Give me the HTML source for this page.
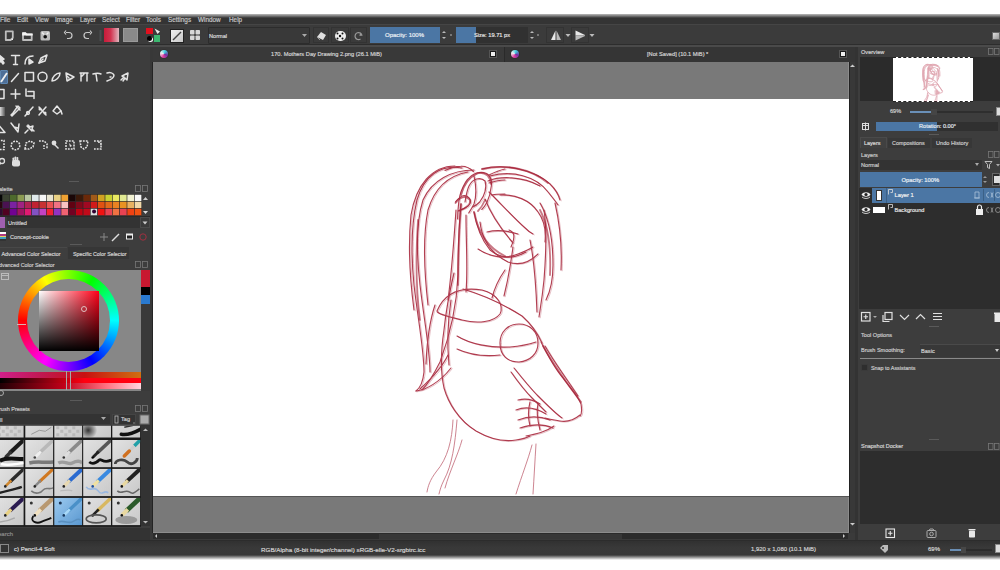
<!DOCTYPE html>
<html><head><meta charset="utf-8">
<style>
*{margin:0;padding:0;box-sizing:border-box}
html,body{width:1000px;height:570px;overflow:hidden;background:#fff}
body{position:relative;font-family:"Liberation Sans",sans-serif;color:#c8c8c8;font-size:7px}
.a{position:absolute}
#app{left:0;top:14px;width:1000px;height:546px;background:#3a3a3a;overflow:hidden}
#menubar{left:0;top:0;width:1000px;height:10px;background:#343434}
#menubar span{position:absolute;top:2px;font-size:6.4px;color:#c4c4c4;white-space:nowrap;-webkit-text-stroke:0.2px currentColor}
#toolbar{left:0;top:10px;width:1000px;height:21px;background:#3b3b3b;border-top:1px solid #454545;border-bottom:1px solid #2d2d2d}
#strip{left:0;top:31px;width:1000px;height:1.5px;background:#4a4a4a}
#leftdock{left:0;top:33px;width:151px;height:493px;background:#3d3d3d}
#tabbar{left:151px;top:33px;width:706px;height:15px;background:#363636}
#canvasarea{left:153px;top:48px;width:696px;height:471px;background:#797979;box-shadow:inset -1px -1px 0 #8c8c8c}
#paper{left:0;top:36.5px;width:696px;height:397.5px;background:#fff;box-shadow:0 1px 0 #555}
#vscroll{left:849px;top:48px;width:7px;height:471px;background:#383838;border-left:1px solid #222}
#hscroll{left:153px;top:519px;width:695px;height:6px;background:#2b2b2b}
#rightdock{left:857px;top:33px;width:143px;height:493px;background:#3d3d3d}
#statusbar{left:0;top:526px;width:1000px;height:20px;background:linear-gradient(180deg,#303030,#393939 40%,#373737)}
.t{position:absolute;white-space:nowrap;-webkit-text-stroke:0.2px currentColor}
</style></head>
<body>
<div id="app" class="a">
  <div id="menubar" class="a">
    <span style="left:0">File</span><span style="left:17px">Edit</span><span style="left:35px">View</span><span style="left:55px">Image</span><span style="left:80px">Layer</span><span style="left:102px">Select</span><span style="left:126px">Filter</span><span style="left:146px">Tools</span><span style="left:168px">Settings</span><span style="left:198px">Window</span><span style="left:229px">Help</span>
  </div>
  <div id="toolbar" class="a">
    <svg class="a" style="left:0;top:0" width="1000" height="21" viewBox="0 0 1000 21">
      <g fill="none" stroke="#bdbdbd" stroke-width="1.8" stroke-linejoin="round">
        <path d="M5.8 6.3h7v6.5l-2.2 2.2h-4.8z"/>
        <path d="M23 8.5h2.5l1 1h5.2v5.5h-8.7z"/>
      </g>
      <path d="M11 15l2-2v2z" fill="#eee"/>
      <path d="M22.2 7.3h3.5l1.2 1.2h5.8v2h-10.5z" fill="#f4f4f4"/>
      <rect x="40.5" y="6" width="9.5" height="9.5" rx="1.5" fill="#bbb"/>
      <circle cx="45.2" cy="11.8" r="1.8" fill="#111"/>
      <path d="M42 7.5l2 2M48.5 7.5l-2 2" stroke="#f0f0f0" stroke-width="1.3"/>
      <g fill="none" stroke="#c8c8c8" stroke-width="1.2">
        <path d="M66 7.5h3a3 3 0 0 1 0 6h-2"/><path d="M66 5.5l-1.5 2l1.5 2"/>
        <path d="M90 7.5h-3a3 3 0 0 0 0 6h2"/><path d="M90 5.5l1.5 2l-1.5 2"/>
      </g>
      <rect x="99.5" y="5" width="2" height="11" fill="#4a4e50"/>
    </svg>
    <div class="a" style="left:104px;top:3px;width:15px;height:14px;background:linear-gradient(90deg,#c81c3a 0%,#d23450 45%,#e0b8c0 100%)"></div>
    <div class="a" style="left:123px;top:3px;width:15px;height:14px;background:#8a8a8a;border:1px solid #9a9a9a"></div>
    <div class="a" style="left:146px;top:3px;width:7px;height:6px;background:#e0101e"></div>
    <div class="a" style="left:154px;top:10px;width:6px;height:7px;background:#3cb870"></div>
    <div class="a" style="left:147px;top:11px;width:5px;height:5px;background:#000;border-radius:50%;box-shadow:1px 1px 0 #fff"></div>
    <svg class="a" style="left:154px;top:3px" width="7" height="7"><path d="M0.5 0.5L6 3.5L3.5 6z" fill="#e8e8e8"/></svg>
    <div class="a" style="left:170px;top:4px;width:14px;height:14px;background:linear-gradient(135deg,#f0f0f0,#c8c8c8);border:1px solid #222"></div>
    <svg class="a" style="left:170px;top:4px" width="14" height="14"><path d="M3 11L11 3" stroke="#444" stroke-width="1.5"/></svg>
    <svg class="a" style="left:190px;top:5px" width="11" height="11"><g fill="#d8d8d8"><rect x="0" y="0" width="4.5" height="4.5" rx="0.8"/><rect x="5.5" y="0" width="4.5" height="4.5" rx="0.8"/><rect x="0" y="5.5" width="4.5" height="4.5" rx="0.8"/><rect x="5.5" y="5.5" width="4.5" height="4.5" rx="0.8"/></g></svg>
    <div class="a" style="left:207.5px;top:1.5px;width:102px;height:17px;background:#393939;border:1px solid #2c2c2c;border-radius:1px"></div><div class="a" style="left:313px;top:2px;width:16px;height:16px;border:1px solid #333"></div><div class="a" style="left:331px;top:2px;width:18px;height:16px;border:1px solid #333"></div><div class="a" style="left:350px;top:2px;width:17px;height:16px;border:1px solid #333"></div><div class="a" style="left:546px;top:2px;width:18px;height:16px;border:1px solid #333"></div><div class="a" style="left:571px;top:2px;width:18px;height:16px;border:1px solid #333"></div>
    <span class="t" style="left:209px;top:8px;font-size:5.6px;color:#d8d8d8">Normal</span>
    <svg class="a" style="left:302px;top:9px" width="6" height="4"><path d="M0 0h5l-2.5 3z" fill="#aaa"/></svg>
    <svg class="a" style="left:315px;top:5px" width="12" height="11"><path d="M2 7l4-5l5 3l-3 5z" fill="#e0e0e0"/><path d="M2 7l3 3" stroke="#999"/></svg>
    <div class="a" style="left:335px;top:5.5px;width:10.5px;height:10.5px;background:#eee;border-radius:50%"></div>
    <svg class="a" style="left:335px;top:6px" width="10" height="10"><g fill="#111"><circle cx="5" cy="5" r="1.2"/><circle cx="2.5" cy="2.5" r="1"/><circle cx="7.5" cy="2.5" r="1"/><circle cx="2.5" cy="7.5" r="1"/><circle cx="7.5" cy="7.5" r="1"/></g></svg>
    <svg class="a" style="left:354px;top:6px" width="10" height="10"><path d="M8 4.5A3.5 3.5 0 1 0 6.5 8" fill="none" stroke="#999" stroke-width="1.2"/><path d="M6 1.5l2.5 3l-3 0.5z" fill="#999"/></svg>
    <div class="a" style="left:370px;top:2px;width:70px;height:16px;background:#4b76a4"></div>
    <span class="t" style="left:385px;top:7px;font-size:6px;color:#e8eef4">Opacity: 100%</span>
    <svg class="a" style="left:441px;top:3px" width="6" height="14"><path d="M1 5l2-2l2 2zM1 9l2 2l2-2z" fill="#bbb"/></svg>
    <div class="a" style="left:450px;top:9px;width:2px;height:2px;background:#777"></div>
    <div class="a" style="left:456px;top:2px;width:20px;height:16px;background:#4b76a4"></div>
    <div class="a" style="left:476px;top:2px;width:52px;height:16px;background:#313131"></div>
    <span class="t" style="left:474px;top:7px;font-size:5.7px;color:#e0e0e0">Size: 19.71 px</span>
    <svg class="a" style="left:529px;top:3px" width="6" height="14"><path d="M1 5l2-2l2 2zM1 9l2 2l2-2z" fill="#bbb"/></svg>
    <div class="a" style="left:537px;top:9px;width:2px;height:2px;background:#777"></div>
    <svg class="a" style="left:550px;top:5px" width="12" height="11"><path d="M5.5 0.5L1 10h4.5z" fill="#e8e8e8"/><path d="M6.5 0.5L11 10H6.5z" fill="#bbb"/></svg>
    <svg class="a" style="left:565px;top:8px" width="6" height="5"><path d="M0.5 1h5l-2.5 3z" fill="#bbb"/></svg>
    <svg class="a" style="left:575px;top:5px" width="11" height="11"><path d="M0.5 0.5L10 5v0.5H0.5z" fill="#e8e8e8"/><path d="M0.5 10.5L10 6v-0.5H0.5z" fill="#bbb"/></svg>
    <svg class="a" style="left:589px;top:8px" width="6" height="5"><path d="M0.5 1h5l-2.5 3z" fill="#bbb"/></svg>
    <div class="a" style="left:992px;top:7px;width:8px;height:8px;background:linear-gradient(135deg,#ddd,#999);border:1px solid #666"></div>
  </div>
  <div id="strip" class="a"></div>
  <div id="leftdock" class="a"></div>
  <div id="tabbar" class="a"></div>
  <div id="canvasarea" class="a"><div id="paper" class="a"></div></div>
  <div id="vscroll" class="a"></div>
  <div id="hscroll" class="a"></div>
  <div id="rightdock" class="a"></div>
  <div id="statusbar" class="a"></div>
</div>

<!-- palette header -->
<div class="a" style="left:69px;top:181px;width:10px;height:1px;background:#5a5a5a"></div>
<span class="t" style="left:-1px;top:186px;font-size:5.6px;color:#c8c8c8">alette</span>
<svg class="a" style="left:135px;top:185px" width="14" height="8"><g fill="none" stroke="#777" stroke-width="0.8"><rect x="0.5" y="0.5" width="5" height="6"/><rect x="7.5" y="0.5" width="5" height="6"/></g></svg>
<svg class="a" style="left:0;top:0" width="151" height="230"><rect x="-4.90" y="194.5" width="7.38" height="7.05" fill="#050505" stroke="#2a2a2a" stroke-width="0.5"/><rect x="2.43" y="194.5" width="7.38" height="7.05" fill="#3b4232" stroke="#2a2a2a" stroke-width="0.5"/><rect x="9.76" y="194.5" width="7.38" height="7.05" fill="#4e6a2c" stroke="#2a2a2a" stroke-width="0.5"/><rect x="17.09" y="194.5" width="7.38" height="7.05" fill="#8b9b52" stroke="#2a2a2a" stroke-width="0.5"/><rect x="24.42" y="194.5" width="7.38" height="7.05" fill="#b9c8a2" stroke="#2a2a2a" stroke-width="0.5"/><rect x="31.75" y="194.5" width="7.38" height="7.05" fill="#dfe9ea" stroke="#2a2a2a" stroke-width="0.5"/><rect x="39.08" y="194.5" width="7.38" height="7.05" fill="#f6f6f6" stroke="#2a2a2a" stroke-width="0.5"/><rect x="46.41" y="194.5" width="7.38" height="7.05" fill="#e9e5d2" stroke="#2a2a2a" stroke-width="0.5"/><rect x="53.74" y="194.5" width="7.38" height="7.05" fill="#e9d184" stroke="#2a2a2a" stroke-width="0.5"/><rect x="61.07" y="194.5" width="7.38" height="7.05" fill="#f0a232" stroke="#2a2a2a" stroke-width="0.5"/><rect x="68.40" y="194.5" width="7.38" height="7.05" fill="#1a0707" stroke="#2a2a2a" stroke-width="0.5"/><rect x="75.73" y="194.5" width="7.38" height="7.05" fill="#3b1909" stroke="#2a2a2a" stroke-width="0.5"/><rect x="83.06" y="194.5" width="7.38" height="7.05" fill="#6b2909" stroke="#2a2a2a" stroke-width="0.5"/><rect x="90.39" y="194.5" width="7.38" height="7.05" fill="#a15a19" stroke="#2a2a2a" stroke-width="0.5"/><rect x="97.72" y="194.5" width="7.38" height="7.05" fill="#d1a221" stroke="#2a2a2a" stroke-width="0.5"/><rect x="105.05" y="194.5" width="7.38" height="7.05" fill="#c9d132" stroke="#2a2a2a" stroke-width="0.5"/><rect x="112.38" y="194.5" width="7.38" height="7.05" fill="#e9e962" stroke="#2a2a2a" stroke-width="0.5"/><rect x="119.71" y="194.5" width="7.38" height="7.05" fill="#e1e992" stroke="#2a2a2a" stroke-width="0.5"/><rect x="127.04" y="194.5" width="7.38" height="7.05" fill="#f1f1d2" stroke="#2a2a2a" stroke-width="0.5"/><rect x="134.37" y="194.5" width="7.38" height="7.05" fill="#f9f9f9" stroke="#2a2a2a" stroke-width="0.5"/><rect x="-4.90" y="201.5" width="7.38" height="7.05" fill="#2a0510" stroke="#2a2a2a" stroke-width="0.5"/><rect x="2.43" y="201.5" width="7.38" height="7.05" fill="#4a1252" stroke="#2a2a2a" stroke-width="0.5"/><rect x="9.76" y="201.5" width="7.38" height="7.05" fill="#7b22a2" stroke="#2a2a2a" stroke-width="0.5"/><rect x="17.09" y="201.5" width="7.38" height="7.05" fill="#a12282" stroke="#2a2a2a" stroke-width="0.5"/><rect x="24.42" y="201.5" width="7.38" height="7.05" fill="#b12252" stroke="#2a2a2a" stroke-width="0.5"/><rect x="31.75" y="201.5" width="7.38" height="7.05" fill="#c12232" stroke="#2a2a2a" stroke-width="0.5"/><rect x="39.08" y="201.5" width="7.38" height="7.05" fill="#c93232" stroke="#2a2a2a" stroke-width="0.5"/><rect x="46.41" y="201.5" width="7.38" height="7.05" fill="#e95252" stroke="#2a2a2a" stroke-width="0.5"/><rect x="53.74" y="201.5" width="7.38" height="7.05" fill="#f17282" stroke="#2a2a2a" stroke-width="0.5"/><rect x="61.07" y="201.5" width="7.38" height="7.05" fill="#f9c2c2" stroke="#2a2a2a" stroke-width="0.5"/><rect x="68.40" y="201.5" width="7.38" height="7.05" fill="#610212" stroke="#2a2a2a" stroke-width="0.5"/><rect x="75.73" y="201.5" width="7.38" height="7.05" fill="#81091a" stroke="#2a2a2a" stroke-width="0.5"/><rect x="83.06" y="201.5" width="7.38" height="7.05" fill="#a10922" stroke="#2a2a2a" stroke-width="0.5"/><rect x="90.39" y="201.5" width="7.38" height="7.05" fill="#d11a1a" stroke="#2a2a2a" stroke-width="0.5"/><rect x="97.72" y="201.5" width="7.38" height="7.05" fill="#e15212" stroke="#2a2a2a" stroke-width="0.5"/><rect x="105.05" y="201.5" width="7.38" height="7.05" fill="#e16a1a" stroke="#2a2a2a" stroke-width="0.5"/><rect x="112.38" y="201.5" width="7.38" height="7.05" fill="#e98222" stroke="#2a2a2a" stroke-width="0.5"/><rect x="119.71" y="201.5" width="7.38" height="7.05" fill="#e99222" stroke="#2a2a2a" stroke-width="0.5"/><rect x="127.04" y="201.5" width="7.38" height="7.05" fill="#e9b262" stroke="#2a2a2a" stroke-width="0.5"/><rect x="134.37" y="201.5" width="7.38" height="7.05" fill="#f1d9aa" stroke="#2a2a2a" stroke-width="0.5"/><rect x="-4.90" y="208.5" width="7.38" height="7.05" fill="#300a32" stroke="#2a2a2a" stroke-width="0.5"/><rect x="2.43" y="208.5" width="7.38" height="7.05" fill="#510222" stroke="#2a2a2a" stroke-width="0.5"/><rect x="9.76" y="208.5" width="7.38" height="7.05" fill="#710292" stroke="#2a2a2a" stroke-width="0.5"/><rect x="17.09" y="208.5" width="7.38" height="7.05" fill="#a11262" stroke="#2a2a2a" stroke-width="0.5"/><rect x="24.42" y="208.5" width="7.38" height="7.05" fill="#e11a72" stroke="#2a2a2a" stroke-width="0.5"/><rect x="31.75" y="208.5" width="7.38" height="7.05" fill="#8252c2" stroke="#2a2a2a" stroke-width="0.5"/><rect x="39.08" y="208.5" width="7.38" height="7.05" fill="#c242c2" stroke="#2a2a2a" stroke-width="0.5"/><rect x="46.41" y="208.5" width="7.38" height="7.05" fill="#f12232" stroke="#2a2a2a" stroke-width="0.5"/><rect x="53.74" y="208.5" width="7.38" height="7.05" fill="#9232c2" stroke="#2a2a2a" stroke-width="0.5"/><rect x="61.07" y="208.5" width="7.38" height="7.05" fill="#f16272" stroke="#2a2a2a" stroke-width="0.5"/><rect x="68.40" y="208.5" width="7.38" height="7.05" fill="#710222" stroke="#2a2a2a" stroke-width="0.5"/><rect x="75.73" y="208.5" width="7.38" height="7.05" fill="#c10212" stroke="#2a2a2a" stroke-width="0.5"/><rect x="83.06" y="208.5" width="7.38" height="7.05" fill="#c10a1a" stroke="#2a2a2a" stroke-width="0.5"/><rect x="90.39" y="208.5" width="7.38" height="7.05" fill="#ddd" stroke="#2a2a2a" stroke-width="0.5"/><rect x="97.72" y="208.5" width="7.38" height="7.05" fill="#f11212" stroke="#2a2a2a" stroke-width="0.5"/><rect x="105.05" y="208.5" width="7.38" height="7.05" fill="#e94252" stroke="#2a2a2a" stroke-width="0.5"/><rect x="112.38" y="208.5" width="7.38" height="7.05" fill="#f17242" stroke="#2a2a2a" stroke-width="0.5"/><rect x="119.71" y="208.5" width="7.38" height="7.05" fill="#e94252" stroke="#2a2a2a" stroke-width="0.5"/><rect x="127.04" y="208.5" width="7.38" height="7.05" fill="#f14212" stroke="#2a2a2a" stroke-width="0.5"/><rect x="134.37" y="208.5" width="7.38" height="7.05" fill="#f15212" stroke="#2a2a2a" stroke-width="0.5"/><circle cx="94.06" cy="211.5" r="2" fill="#300030"/></svg>
<svg class="a" style="left:141px;top:194px" width="9" height="22"><path d="M2 6l2.5-3l2.5 3z" fill="#ccc"/><path d="M2 17l2.5 3l2.5-3z" fill="#ddd"/></svg>
<div class="a" style="left:0;top:216px;width:151px;height:1px;background:#2a2a2a"></div>
<div class="a" style="left:0;top:217px;width:5px;height:11px;background:#a060b0"></div>
<div class="a" style="left:7px;top:217px;width:133px;height:11px;background:#333"></div>
<span class="t" style="left:8px;top:219.5px;font-size:5.6px;color:#d0d0d0">Untitled</span>
<svg class="a" style="left:140px;top:217px" width="10" height="11"><rect x="0.5" y="0.5" width="9" height="10" fill="#3a3a3a" stroke="#4a4a4a"/><path d="M2.5 4.5h5l-2.5 3z" fill="#ccc"/></svg>
<div class="a" style="left:0;top:232px;width:6px;height:9px;background:linear-gradient(180deg,#fff 0,#fff 20%,#b03a80 20%,#b03a80 40%,#e8d060 40%,#e8d060 60%,#40a0c0 60%,#40a0c0 80%,#333 80%)"></div>
<span class="t" style="left:10px;top:233.5px;font-size:5.6px;color:#d0d0d0">Concept-cookie</span>
<svg class="a" style="left:98px;top:230px" width="52" height="14">
 <g fill="none" stroke="#888" stroke-width="1"><path d="M6 3v8M2 7h8"/></g>
 <g fill="none" stroke="#ddd" stroke-width="1.4"><path d="M14 11l7-7"/></g>
 <rect x="28" y="3.5" width="7" height="6" fill="#eee"/><rect x="29" y="5.5" width="5" height="3" fill="#222"/>
 <circle cx="45" cy="7" r="3.2" fill="none" stroke="#a03040" stroke-width="1"/>
</svg>
<div class="a" style="left:70px;top:244px;width:12px;height:1px;background:#5a5a5a"></div>
<!-- color selector tabs -->
<div class="a" style="left:0;top:247px;width:67px;height:12px;background:#3e3e3e;border-top:1px solid #484848"></div>
<div class="a" style="left:68px;top:247px;width:61px;height:12px;background:#363636"></div>
<span class="t" style="left:1.5px;top:250.5px;font-size:5.35px;color:#d0d0d0">Advanced Color Selector</span>
<span class="t" style="left:73px;top:250.5px;font-size:5.3px;color:#d0d0d0">Specific Color Selector</span>
<span class="t" style="left:-1px;top:262px;font-size:5.35px;color:#c8c8c8">dvanced Color Selector</span>
<svg class="a" style="left:135px;top:261px" width="14" height="8"><g fill="none" stroke="#777" stroke-width="0.8"><rect x="0.5" y="0.5" width="5" height="6"/><rect x="7.5" y="0.5" width="5" height="6"/></g></svg>
<!-- color selector -->
<div class="a" style="left:0;top:270px;width:141px;height:121px;background:#878787"></div>
<div class="a" style="left:18px;top:270px;width:101px;height:101px;border-radius:50%;background:conic-gradient(from 270deg,#ff0000,#ffff00,#00ff00,#00ffff,#0000ff,#ff00ff,#ff0000)"></div>
<div class="a" style="left:27px;top:279px;width:83px;height:83px;border-radius:50%;background:#878787"></div>
<div class="a" style="left:39px;top:291px;width:60px;height:60px;background:linear-gradient(180deg,rgba(0,0,0,0),#000),linear-gradient(90deg,#fff,#ff0018)"></div>
<div class="a" style="left:81px;top:306px;width:6px;height:6px;border-radius:50%;border:1px solid #e0c0c0"></div>
<div class="a" style="left:17px;top:324px;width:9px;height:1px;background:#e0b0b0"></div>
<svg class="a" style="left:1px;top:272px" width="9" height="9"><rect x="0.5" y="1.5" width="7" height="6" fill="none" stroke="#bbb"/><path d="M0.5 3.5h7" stroke="#bbb"/></svg>
<div class="a" style="left:0;top:372px;width:141px;height:5.5px;background:linear-gradient(90deg,#d0208a,#c01850 30%,#c81010 60%,#d07010)"></div>
<div class="a" style="left:0;top:377.5px;width:141px;height:5.5px;background:linear-gradient(90deg,#000,#800010 30%,#ff0010 60%,#ff0010)"></div>
<div class="a" style="left:0;top:383px;width:141px;height:6px;background:linear-gradient(90deg,#200005,#c00018 45%,#ff7080 75%,#ffd8e0)"></div>
<div class="a" style="left:65.5px;top:371px;width:1px;height:19px;background:#a8a8a8"></div>
<div class="a" style="left:69.5px;top:371px;width:1px;height:19px;background:#a8a8a8"></div>
<div class="a" style="left:141px;top:270px;width:9px;height:17px;background:#c81830"></div>
<div class="a" style="left:141px;top:287px;width:9px;height:8px;background:#000"></div>
<div class="a" style="left:141px;top:295px;width:9px;height:9px;background:#2a7ad0"></div>
<div class="a" style="left:141px;top:304px;width:9px;height:87px;background:#3a3a3a"></div>
<svg class="a" style="left:0;top:390px" width="6" height="8"><circle cx="1" cy="3" r="2.5" fill="none" stroke="#aaa"/></svg>
<div class="a" style="left:70px;top:400px;width:12px;height:1px;background:#5a5a5a"></div>
<!-- brush presets -->
<span class="t" style="left:-1px;top:405.5px;font-size:5.5px;color:#c8c8c8">rush Presets</span>
<svg class="a" style="left:135px;top:405px" width="14" height="8"><g fill="none" stroke="#777" stroke-width="0.8"><rect x="0.5" y="0.5" width="5" height="6"/><rect x="7.5" y="0.5" width="5" height="6"/></g></svg>
<div class="a" style="left:0;top:414px;width:110px;height:10px;background:#333"></div>
<span class="t" style="left:0px;top:416.5px;font-size:5.6px;color:#c8c8c8">ll</span>
<svg class="a" style="left:101px;top:417px" width="6" height="4"><path d="M0 0h5l-2.5 3z" fill="#aaa"/></svg>
<div class="a" style="left:112px;top:414px;width:24px;height:11px;background:#333;border:1px solid #444"></div><svg class="a" style="left:112px;top:414px" width="38" height="11"><rect x="3" y="2" width="3" height="7" fill="none" stroke="#bbb" stroke-width="0.8"/><path d="M21 9h2" stroke="#888"/><rect x="28" y="1" width="9" height="9" fill="#aaa" stroke="#666"/></svg><span class="t" style="left:121px;top:416px;font-size:5.6px;color:#ccc">Tag</span>
<svg class="a" style="left:0;top:0" width="151" height="540"><defs><clipPath id="bc"><rect x="0" y="425.8" width="141" height="101"/></clipPath><linearGradient id="tg" x1="0" y1="0" x2="1" y2="1"><stop offset="0" stop-color="#e2e2e2"/><stop offset="1" stop-color="#c8c8c8"/></linearGradient><linearGradient id="tb" x1="0" y1="0" x2="1" y2="1"><stop offset="0" stop-color="#9ccaf0"/><stop offset="1" stop-color="#5a98d0"/></linearGradient><radialGradient id="blob"><stop offset="0" stop-color="#333"/><stop offset="1" stop-color="#333" stop-opacity="0"/></radialGradient><clipPath id="t00"><rect x="-4.2" y="410.3" width="27.8" height="27.2"/></clipPath><clipPath id="t01"><rect x="25.3" y="410.3" width="27.8" height="27.2"/></clipPath><clipPath id="t02"><rect x="54.3" y="410.3" width="27.8" height="27.2"/></clipPath><clipPath id="t03"><rect x="83.2" y="410.3" width="27.8" height="27.2"/></clipPath><clipPath id="t04"><rect x="112.3" y="410.3" width="27.8" height="27.2"/></clipPath><clipPath id="t10"><rect x="-4.2" y="440" width="27.8" height="27.2"/></clipPath><clipPath id="t11"><rect x="25.3" y="440" width="27.8" height="27.2"/></clipPath><clipPath id="t12"><rect x="54.3" y="440" width="27.8" height="27.2"/></clipPath><clipPath id="t13"><rect x="83.2" y="440" width="27.8" height="27.2"/></clipPath><clipPath id="t14"><rect x="112.3" y="440" width="27.8" height="27.2"/></clipPath><clipPath id="t20"><rect x="-4.2" y="468.9" width="27.8" height="27.2"/></clipPath><clipPath id="t21"><rect x="25.3" y="468.9" width="27.8" height="27.2"/></clipPath><clipPath id="t22"><rect x="54.3" y="468.9" width="27.8" height="27.2"/></clipPath><clipPath id="t23"><rect x="83.2" y="468.9" width="27.8" height="27.2"/></clipPath><clipPath id="t24"><rect x="112.3" y="468.9" width="27.8" height="27.2"/></clipPath><clipPath id="t30"><rect x="-4.2" y="497.9" width="27.8" height="27.2"/></clipPath><clipPath id="t31"><rect x="25.3" y="497.9" width="27.8" height="27.2"/></clipPath><clipPath id="t32"><rect x="54.3" y="497.9" width="27.8" height="27.2"/></clipPath><clipPath id="t33"><rect x="83.2" y="497.9" width="27.8" height="27.2"/></clipPath><clipPath id="t34"><rect x="112.3" y="497.9" width="27.8" height="27.2"/></clipPath></defs><g clip-path="url(#bc)"><rect x="0" y="400" width="141" height="130" fill="#1a1a1a"/><rect x="-4.2" y="410.3" width="27.8" height="27.2" fill="url(#tg)"/><g clip-path="url(#t00)"><rect x="-2.2" y="426.3" width="3" height="3" fill="#aaa" opacity="0.6"/><rect x="-2.2" y="433.3" width="3" height="3" fill="#aaa" opacity="0.6"/><rect x="1.7999999999999998" y="429.8" width="3" height="3" fill="#aaa" opacity="0.6"/><rect x="5.8" y="426.3" width="3" height="3" fill="#aaa" opacity="0.6"/><rect x="5.8" y="433.3" width="3" height="3" fill="#aaa" opacity="0.6"/><rect x="9.8" y="429.8" width="3" height="3" fill="#aaa" opacity="0.6"/><rect x="13.8" y="426.3" width="3" height="3" fill="#aaa" opacity="0.6"/><rect x="13.8" y="433.3" width="3" height="3" fill="#aaa" opacity="0.6"/><rect x="17.8" y="429.8" width="3" height="3" fill="#aaa" opacity="0.6"/></g><rect x="25.3" y="410.3" width="27.8" height="27.2" fill="url(#tg)"/><g clip-path="url(#t01)"><path d="M31.3 434.3l8-4l6 1l6-4" stroke="#999" stroke-width="1" fill="none"/></g><rect x="54.3" y="410.3" width="27.8" height="27.2" fill="url(#tg)"/><g clip-path="url(#t02)"><rect x="56.3" y="426.3" width="3" height="3" fill="#aaa" opacity="0.6"/><rect x="56.3" y="433.3" width="3" height="3" fill="#aaa" opacity="0.6"/><rect x="60.3" y="429.8" width="3" height="3" fill="#aaa" opacity="0.6"/><rect x="64.3" y="426.3" width="3" height="3" fill="#aaa" opacity="0.6"/><rect x="64.3" y="433.3" width="3" height="3" fill="#aaa" opacity="0.6"/><rect x="68.3" y="429.8" width="3" height="3" fill="#aaa" opacity="0.6"/><rect x="72.3" y="426.3" width="3" height="3" fill="#aaa" opacity="0.6"/><rect x="72.3" y="433.3" width="3" height="3" fill="#aaa" opacity="0.6"/><rect x="76.3" y="429.8" width="3" height="3" fill="#aaa" opacity="0.6"/></g><rect x="83.2" y="410.3" width="27.8" height="27.2" fill="url(#tg)"/><g clip-path="url(#t03)"><ellipse cx="88.2" cy="430.3" rx="9" ry="9" fill="url(#blob)"/></g><rect x="112.3" y="410.3" width="27.8" height="27.2" fill="url(#tg)"/><g clip-path="url(#t04)"><path d="M121.3 434.3c6 1 12-1 19-5" stroke="#111" stroke-width="3.5" fill="none" stroke-linecap="round"/><path d="M124.3 427.3c5-1 10-2 16-4" stroke="#333" stroke-width="1.5" fill="none"/></g><rect x="-4.2" y="440" width="27.8" height="27.2" fill="url(#tg)"/><g clip-path="url(#t10)"><path d="M24.8 439 L9.8 453" stroke="#1a1a1a" stroke-width="4.2" stroke-linecap="butt"/><path d="M11.3 451.5 L5.8 457" stroke="#333" stroke-width="3.4000000000000004"/><circle cx="5.3" cy="457.5" r="1.3" fill="#111"/><path d="M-0.20000000000000018 461c6-4 12-2 24-2" stroke="#111" stroke-width="4" fill="none"/><path d="M0.7999999999999998 464c8 2 14 0 23-1" stroke="#fff" stroke-width="2.5" fill="none"/></g><rect x="25.3" y="440" width="27.8" height="27.2" fill="url(#tg)"/><g clip-path="url(#t11)"><path d="M54.3 439 L39.3 453" stroke="#b8b8b8" stroke-width="3.6" stroke-linecap="butt"/><path d="M40.8 451.5 L35.3 457" stroke="#eee" stroke-width="2.8"/><circle cx="34.8" cy="457.5" r="1.3" fill="#444"/><path d="M29.3 463c8-2 14 0 24-1" stroke="#555" stroke-width="3.5" fill="none" opacity="0.7"/></g><rect x="54.3" y="440" width="27.8" height="27.2" fill="url(#tg)"/><g clip-path="url(#t12)"><path d="M83.3 439 L68.3 453" stroke="#8a8a8a" stroke-width="3.6" stroke-linecap="butt"/><path d="M69.8 451.5 L64.3 457" stroke="#ddd" stroke-width="2.8"/><circle cx="63.8" cy="457.5" r="1.3" fill="#333"/><path d="M58.3 463c6-3 10 2 14 0s8-2 10 0" stroke="#888" stroke-width="3.5" fill="none" opacity="0.7"/></g><rect x="83.2" y="440" width="27.8" height="27.2" fill="url(#tg)"/><g clip-path="url(#t13)"><path d="M112.2 439 L97.2 453" stroke="#555" stroke-width="3.6" stroke-linecap="butt"/><path d="M98.7 451.5 L93.2 457" stroke="#222" stroke-width="2.8"/><circle cx="92.7" cy="457.5" r="1.3" fill="#000"/><path d="M89.2 462c4 3 8 0 10-2s4 4 12 0" stroke="#111" stroke-width="2.8" fill="none"/></g><rect x="112.3" y="440" width="27.8" height="27.2" fill="url(#tg)"/><g clip-path="url(#t14)"><path d="M141.3 439 L134.3 446" stroke="#20a0a8" stroke-width="3.5"/><path d="M134.3 446 L129.3 451" stroke="#ccc" stroke-width="3"/><path d="M129.3 451 L124.3 456" stroke="#d07020" stroke-width="3.5" stroke-linecap="round"/><path d="M115.3 464c0-4 8-6 12-2s10 0 10-4" stroke="#444" stroke-width="2.8" fill="none"/></g><rect x="-4.2" y="468.9" width="27.8" height="27.2" fill="url(#tg)"/><g clip-path="url(#t20)"><path d="M24.8 467.9 L9.8 481.9" stroke="#2a2a2a" stroke-width="3.4" stroke-linecap="butt"/><path d="M11.3 480.4 L5.8 485.9" stroke="#d08830" stroke-width="2.5999999999999996"/><circle cx="5.3" cy="486.4" r="1.3" fill="#222"/><path d="M-0.20000000000000018 492.9c6-2 14-3 22-6" stroke="#222" stroke-width="2.4" fill="none"/></g><rect x="25.3" y="468.9" width="27.8" height="27.2" fill="url(#tg)"/><g clip-path="url(#t21)"><path d="M54.3 467.9 L39.3 481.9" stroke="#d07820" stroke-width="3.2" stroke-linecap="butt"/><path d="M40.8 480.4 L35.3 485.9" stroke="#888" stroke-width="2.4000000000000004"/><circle cx="34.8" cy="486.4" r="1.3" fill="#222"/><path d="M31.3 490.9c4 4 10 2 12-1s6 0 10-2" stroke="#777" stroke-width="1.6" fill="none"/></g><rect x="54.3" y="468.9" width="27.8" height="27.2" fill="url(#tg)"/><g clip-path="url(#t22)"><path d="M83.3 467.9 L68.3 481.9" stroke="#2a6ad0" stroke-width="4" stroke-linecap="butt"/><path d="M69.8 480.4 L64.3 485.9" stroke="#e8d8b0" stroke-width="3.2"/><circle cx="63.8" cy="486.4" r="1.3" fill="#222"/><path d="M60.3 490.9c4 0 8-2 12 0" stroke="#bbb" stroke-width="1.2" fill="none"/></g><rect x="83.2" y="468.9" width="27.8" height="27.2" fill="url(#tg)"/><g clip-path="url(#t23)"><path d="M112.2 467.9 L97.2 481.9" stroke="#3a8ae0" stroke-width="4" stroke-linecap="butt"/><path d="M98.7 480.4 L93.2 485.9" stroke="#f0e0a0" stroke-width="3.2"/><circle cx="92.7" cy="486.4" r="1.3" fill="#2050a0"/><path d="M86.2 486.9c4 6 8-2 12 4s6-2 10 2" stroke="#9ab8e0" stroke-width="1.6" fill="none"/></g><rect x="112.3" y="468.9" width="27.8" height="27.2" fill="url(#tg)"/><g clip-path="url(#t24)"><path d="M141.3 467.9 L126.3 481.9" stroke="#222" stroke-width="4" stroke-linecap="butt"/><path d="M127.8 480.4 L122.3 485.9" stroke="#e8d8a0" stroke-width="3.2"/><circle cx="121.8" cy="486.4" r="1.3" fill="#111"/><path d="M117.3 490.9c4 4 8-2 12 1s6 0 10-3" stroke="#666" stroke-width="1.5" fill="none"/></g><rect x="-4.2" y="497.9" width="27.8" height="27.2" fill="url(#tg)"/><g clip-path="url(#t30)"><path d="M24.8 496.9 L9.8 510.9" stroke="#2a1a50" stroke-width="4" stroke-linecap="butt"/><path d="M11.3 509.4 L5.8 514.9" stroke="#e8d080" stroke-width="3.2"/><circle cx="5.3" cy="515.4" r="1.3" fill="#222"/><path d="M-1.2000000000000002 521.9c6 0 12-2 16-4" stroke="#aaa" stroke-width="1.5" fill="none"/></g><rect x="25.3" y="497.9" width="27.8" height="27.2" fill="url(#tg)"/><g clip-path="url(#t31)"><path d="M54.3 496.9 L39.3 510.9" stroke="#b89870" stroke-width="4.4" stroke-linecap="butt"/><path d="M40.8 509.4 L35.3 514.9" stroke="#f0e0c0" stroke-width="3.6000000000000005"/><circle cx="34.8" cy="515.4" r="1.3" fill="#111"/><path d="M33.3 515.9c-4 6 4 8 8 6s6-2 10-4" stroke="#111" stroke-width="1.8" fill="none"/><circle cx="31.3" cy="502.9" r="1.5" fill="#333"/></g><rect x="54.3" y="497.9" width="27.8" height="27.2" fill="url(#tb)"/><g clip-path="url(#t32)"><path d="M83.3 496.9 L68.3 510.9" stroke="#4a90c8" stroke-width="3.4" stroke-linecap="butt"/><path d="M69.8 509.4 L64.3 514.9" stroke="#a8d8f8" stroke-width="2.5999999999999996"/><circle cx="63.8" cy="515.4" r="1.3" fill="#1a3a60"/><path d="M58.3 521.9c6-2 10 2 14 0s6-4 8-2" stroke="#5a90c0" stroke-width="1.6" fill="none"/><circle cx="60.3" cy="502.9" r="1.5" fill="#1a3050"/></g><rect x="83.2" y="497.9" width="27.8" height="27.2" fill="url(#tg)"/><g clip-path="url(#t33)"><path d="M112.2 496.9 L97.2 510.9" stroke="#d8b860" stroke-width="3.4" stroke-linecap="butt"/><path d="M98.7 509.4 L93.2 514.9" stroke="#222" stroke-width="2.5999999999999996"/><circle cx="92.7" cy="515.4" r="1.3" fill="#111"/><ellipse cx="96.2" cy="518.9" rx="10" ry="4" stroke="#555" stroke-width="1.6" fill="none"/><circle cx="89.2" cy="502.9" r="1.5" fill="#333"/></g><rect x="112.3" y="497.9" width="27.8" height="27.2" fill="url(#tg)"/><g clip-path="url(#t34)"><path d="M141.3 496.9 L126.3 510.9" stroke="#2a5a2a" stroke-width="4.8" stroke-linecap="butt"/><path d="M127.8 509.4 L122.3 514.9" stroke="#e8d8a0" stroke-width="4.0"/><circle cx="121.8" cy="515.4" r="1.3" fill="#111"/><ellipse cx="126.3" cy="519.9" rx="11" ry="4" fill="#777" opacity="0.6"/><circle cx="118.3" cy="502.9" r="1.5" fill="#333"/></g></g></svg><div class="a" style="left:141px;top:425px;width:9px;height:101px;background:#333"></div><svg class="a" style="left:141px;top:425px" width="9" height="101"><path d="M2 6l2.5-2.5l2.5 2.5z" fill="#bbb"/><path d="M2 96l2.5 2.5l2.5-2.5z" fill="#bbb"/></svg><div class="a" style="left:0;top:528px;width:150px;height:12px;background:#333"></div><span class="t" style="left:-2px;top:531px;font-size:6px;color:#8a8a8a">earch</span>


<!-- SKETCH -->
<svg class="a" style="left:0;top:0" width="1000" height="570" viewBox="0 0 1000 570">
<defs><clipPath id="pc"><rect x="153" y="98.5" width="696" height="397.5"/></clipPath></defs>
<g clip-path="url(#pc)" fill="none" stroke="#a51e34" stroke-linecap="round" stroke-linejoin="round">
 <g stroke-width="1.15" opacity="0.85">
  <!-- ponytail outer strands -->
  <path d="M462 168C440 164 424 176 417 200C411 225 411 255 414 285C418 320 424 350 424 372C423 382 420 388 416 391"/>
  <path d="M474 170C452 170 432 180 423 200C416 222 416 250 420 285C424 320 430 350 430 372"/>
  <path d="M468 172C446 176 434 190 428 210C423 235 424 270 428 305"/>
  <path d="M455 166C432 166 416 185 411 215C408 245 410 280 414 310"/>
  <path d="M416 391C426 390 440 382 451 368"/>
  <path d="M420 389C432 378 442 368 448 355"/>
  <!-- ponytail right edge strands -->
  <path d="M461 204C459 225 458 250 458 275C457 300 452 330 440 362C432 378 426 386 422 390"/>
  <path d="M466 215C466 245 468 270 466 292"/>
  <path d="M456 210C454 240 452 270 448 300"/>
  <!-- bun loops -->
  <path d="M457.6 219C458 205 459 197 461 191.6C464 184 466 180 469.2 177.9C472 175 475 173 478.7 172.6C483 172 487 173 489.2 175.8C491 178 492 182 491.3 186.3C490.5 193 489 198 487.1 202C485 206 483.5 208 481.8 209.5"/>
  <path d="M465 202C466 196 467 190 469 186C471 182 473 180 476.6 179C480 178 483 179 485 181C486 184 486 188 485 191.6C484 196 482 199 479.7 202C477 205 475 206 472.4 207"/>
  <path d="M474 176C476 185 477 195 474 204C472 208 470 211 468.7 213"/>
  <path d="M455.5 202C458 199 460 196.5 462.9 195.8C466 195 469 197 470.3 200C471 203 469 206 466 207.4C463 209 460 210 458.7 210.5"/>
  <path d="M445 170.5C450 168 455 166.5 460.8 166.3C466 166 470 168 473.4 171.6"/>
  <path d="M489 175C495 172 500 170 505 169"/>
  <path d="M489 183C495 181 500 180 505 180"/>
  <path d="M492 195C496 194 500 194 505 194"/>
  <!-- top of head arcs -->
  <path d="M482 169C505 163 535 170 550 184C556 190 559 196 560 200"/>
  <path d="M490 176C512 170 536 176 548 192C552 197 556 202 558 205"/>
  <path d="M488 181C500 176 522 176 540 186"/>
  <path d="M500 195C515 194 530 200 538 212C544 220 546 232 545 242"/>
  <path d="M489 192C502 205 514 218 524 227C528 231 531 233 533 234"/>
  <!-- face -->
  <path d="M474 212C476 224 480 238 490 250C500 258 512 260 526 252"/>
  <path d="M485 199C490 212 500 228 513 243"/>
  <path d="M478 249C488 256 504 260 518 254C526 251 530 249 533 247"/>
  <path d="M487 232C495 230 505 230 518 234"/>
  <path d="M509 230C514 232 516 236 511 247"/>
  <path d="M480 222C482 240 492 254 508 262C520 266 530 262 538 254"/>
  <!-- right hair strands -->
  <path d="M540 203C550 220 553 243 553 265C553 280 550 292 546 300"/>
  <path d="M544 210C547 230 546 255 544 280C542 300 540 310 539 317"/>
  <path d="M555 203C560 225 562 250 561 270"/>
  <path d="M530 240C534 260 536 285 537 312"/>
  <!-- neck -->
  <path d="M513 247C511 262 508 280 504 296"/>
  <path d="M505 270C498 280 494 290 492 298"/>
  <!-- shoulder blade ellipse -->
  <path d="M437 311C445 292 462 287 482 290C498 294 504 306 500 314C494 322 478 324 462 320C446 316 437 314 437 311z"/>
  <!-- shoulder/chest lines -->
  <path d="M463 289C480 294 500 302 522 316C532 325 538 334 542 343"/>
  <path d="M457 336C470 344 490 348 510 347C522 346 530 344 536 342"/>
  <path d="M457 349C468 354 482 357 500 355"/>
  <!-- shoulder circle -->
  <path d="M500 343C500 356 508 362 519 362C530 361 538 354 538 343C538 332 530 324 519 324C508 324 500 332 500 343z"/>
  <!-- arm -->
  <path d="M541 342C548 356 556 370 563 378C570 388 578 396 581 404C582 410 582 414 580 416"/>
  <path d="M580 415C574 420 566 422 560 421C554 420 548 419 545 418"/>
  <path d="M514 368C522 378 530 388 538 396C548 406 556 414 562 418"/>
  <path d="M511 372C518 382 526 392 532 398C538 404 542 408 546 412"/>
  <path d="M545 346C554 362 566 378 578 396"/>
  <!-- body left contour -->
  <path d="M454 273C450 290 446 310 444 330C441 350 440 370 444 388C448 402 458 420 476 431C490 439 504 442 516 440C522 439 527 438 530 436"/>
  <path d="M451 300C448 320 447 345 449 365"/>
  <path d="M435 305C430 320 427 340 426 364"/>
  <!-- hand -->
  <path d="M518 400C526 398 534 400 540 404"/>
  <path d="M516 410C526 406 536 408 546 414"/>
  <path d="M518 420C528 416 540 416 550 420"/>
  <path d="M520 428C532 424 544 424 553 428"/>
  <path d="M526 436C536 434 546 432 554 426"/>
  <path d="M530 402C528 410 528 418 530 426"/>
  <path d="M538 404C536 412 538 422 540 430"/>
  <!-- legs -->
  <g opacity="0.7" stroke-width="0.9">
  <path d="M453 420C452 440 448 458 436 472C430 480 428 486 427 492"/>
  <path d="M457 420C455 445 452 465 444 480C441 486 440 490 439 494"/>
  <path d="M462 440C458 455 450 470 445 488"/>
  <path d="M532 445C528 460 522 475 516 494"/>
  <path d="M536 444C535 460 534 478 533 494"/>
   </g>
</g>
 <g stroke-width="0.8" opacity="0.35" transform="translate(1.2 0.8)"><path d="M462 168C440 164 424 176 417 200C411 225 411 255 414 285C418 320 424 350 424 372C423 382 420 388 416 391"/><path d="M474 170C452 170 432 180 423 200C416 222 416 250 420 285C424 320 430 350 430 372"/><path d="M468 172C446 176 434 190 428 210C423 235 424 270 428 305"/><path d="M455 166C432 166 416 185 411 215C408 245 410 280 414 310"/><path d="M416 391C426 390 440 382 451 368"/><path d="M420 389C432 378 442 368 448 355"/><path d="M461 204C459 225 458 250 458 275C457 300 452 330 440 362C432 378 426 386 422 390"/><path d="M466 215C466 245 468 270 466 292"/><path d="M456 210C454 240 452 270 448 300"/><path d="M457.6 219C458 205 459 197 461 191.6C464 184 466 180 469.2 177.9C472 175 475 173 478.7 172.6C483 172 487 173 489.2 175.8C491 178 492 182 491.3 186.3C490.5 193 489 198 487.1 202C485 206 483.5 208 481.8 209.5"/><path d="M465 202C466 196 467 190 469 186C471 182 473 180 476.6 179C480 178 483 179 485 181C486 184 486 188 485 191.6C484 196 482 199 479.7 202C477 205 475 206 472.4 207"/><path d="M474 176C476 185 477 195 474 204C472 208 470 211 468.7 213"/><path d="M455.5 202C458 199 460 196.5 462.9 195.8C466 195 469 197 470.3 200C471 203 469 206 466 207.4C463 209 460 210 458.7 210.5"/><path d="M445 170.5C450 168 455 166.5 460.8 166.3C466 166 470 168 473.4 171.6"/><path d="M489 175C495 172 500 170 505 169"/><path d="M489 183C495 181 500 180 505 180"/><path d="M492 195C496 194 500 194 505 194"/><path d="M482 169C505 163 535 170 550 184C556 190 559 196 560 200"/><path d="M490 176C512 170 536 176 548 192C552 197 556 202 558 205"/><path d="M488 181C500 176 522 176 540 186"/><path d="M500 195C515 194 530 200 538 212C544 220 546 232 545 242"/><path d="M489 192C502 205 514 218 524 227C528 231 531 233 533 234"/><path d="M474 212C476 224 480 238 490 250C500 258 512 260 526 252"/><path d="M485 199C490 212 500 228 513 243"/><path d="M478 249C488 256 504 260 518 254C526 251 530 249 533 247"/><path d="M487 232C495 230 505 230 518 234"/><path d="M509 230C514 232 516 236 511 247"/><path d="M480 222C482 240 492 254 508 262C520 266 530 262 538 254"/><path d="M540 203C550 220 553 243 553 265C553 280 550 292 546 300"/><path d="M544 210C547 230 546 255 544 280C542 300 540 310 539 317"/><path d="M555 203C560 225 562 250 561 270"/><path d="M530 240C534 260 536 285 537 312"/><path d="M513 247C511 262 508 280 504 296"/><path d="M505 270C498 280 494 290 492 298"/><path d="M437 311C445 292 462 287 482 290C498 294 504 306 500 314C494 322 478 324 462 320C446 316 437 314 437 311z"/><path d="M463 289C480 294 500 302 522 316C532 325 538 334 542 343"/><path d="M457 336C470 344 490 348 510 347C522 346 530 344 536 342"/><path d="M457 349C468 354 482 357 500 355"/><path d="M500 343C500 356 508 362 519 362C530 361 538 354 538 343C538 332 530 324 519 324C508 324 500 332 500 343z"/><path d="M541 342C548 356 556 370 563 378C570 388 578 396 581 404C582 410 582 414 580 416"/><path d="M580 415C574 420 566 422 560 421C554 420 548 419 545 418"/><path d="M514 368C522 378 530 388 538 396C548 406 556 414 562 418"/><path d="M511 372C518 382 526 392 532 398C538 404 542 408 546 412"/><path d="M545 346C554 362 566 378 578 396"/><path d="M454 273C450 290 446 310 444 330C441 350 440 370 444 388C448 402 458 420 476 431C490 439 504 442 516 440C522 439 527 438 530 436"/><path d="M451 300C448 320 447 345 449 365"/><path d="M435 305C430 320 427 340 426 364"/><path d="M518 400C526 398 534 400 540 404"/><path d="M516 410C526 406 536 408 546 414"/><path d="M518 420C528 416 540 416 550 420"/><path d="M520 428C532 424 544 424 553 428"/><path d="M526 436C536 434 546 432 554 426"/><path d="M530 402C528 410 528 418 530 426"/><path d="M538 404C536 412 538 422 540 430"/></g>
 <g stroke-width="1.8" opacity="0.6">
  <path d="M461 204C459 230 458 260 458 285"/>
  <path d="M455.5 203C459 197 466 195 470 200C471 204 466 208 459 211"/><path d="M461 195C463 186 468 178 478 173C486 172 490 176 491 184"/><path d="M485 200C483 205 481 208 478 211"/>
  <path d="M474 212C478 232 488 248 505 256"/>
  <path d="M543 346C552 362 566 382 581 402"/>
  <path d="M418 220C416 250 416 290 420 320"/>
  <path d="M540 210C548 225 551 250 550 275"/>
  <path d="M482 169C505 164 530 168 548 183"/>
 </g>
</g>
</svg>
<!-- TAB BAR -->

<div class="a" style="left:152px;top:47px;width:352px;height:15px;background:#393939"></div>
<div class="a" style="left:505px;top:47px;width:351px;height:15px;background:#353535"></div>
<div class="a" style="left:504px;top:47px;width:1px;height:15px;background:#2a2a2a"></div>
<div class="a" style="left:160px;top:50px;width:8px;height:8px;border-radius:50%;background:conic-gradient(from 200deg,#e040a0,#f0f0f0,#40d0e0,#7030a0,#e040a0);box-shadow:0 0 1px #000"></div>
<div class="a" style="left:511px;top:50px;width:8px;height:8px;border-radius:50%;background:conic-gradient(from 200deg,#e040a0,#f0f0f0,#40d0e0,#7030a0,#e040a0);box-shadow:0 0 1px #000"></div>
<span class="t" style="left:271px;top:51px;font-size:5.7px;color:#d0d0d0">170. Mothers Day Drawing 2.png (26.1 MiB)</span>
<span class="t" style="left:647px;top:51px;font-size:5.7px;color:#d0d0d0">[Not Saved]  (10.1 MiB) *</span>
<div class="a" style="left:489px;top:50px;width:8px;height:8px;background:#1a1a1a;border:1px solid #555"></div>
<div class="a" style="left:491px;top:52px;width:4px;height:4px;background:#eee"></div>
<div class="a" style="left:839px;top:50px;width:8px;height:8px;background:#1a1a1a;border:1px solid #555"></div>
<div class="a" style="left:841px;top:52px;width:4px;height:4px;background:#eee"></div>
<div class="a" style="left:150px;top:47px;width:3px;height:493px;background:#383838"></div><div class="a" style="left:151.5px;top:62px;width:1.5px;height:471px;background:#242424"></div>
<svg class="a" style="left:849px;top:62px" width="7" height="8"><path d="M1 5l2.5-2.5l2.5 2.5z" fill="#ccc"/></svg>
<svg class="a" style="left:849px;top:520px" width="7" height="8"><path d="M1 3l2.5 2.5l2.5-2.5z" fill="#ccc"/></svg>
<svg class="a" style="left:153px;top:533px" width="7" height="6"><path d="M2 3l2-2v4z" fill="#ccc"/></svg>
<svg class="a" style="left:840px;top:533px" width="7" height="6"><path d="M5 3l-2-2v4z" fill="#ccc"/></svg>
<div class="a" style="left:379px;top:533.5px;width:243px;height:5.5px;background:#373737"></div>
<!-- STATUS BAR -->
<div class="a" style="left:0;top:540px;width:1000px;height:1px;background:#2c2c2c"></div>
<div class="a" style="left:0;top:544px;width:9px;height:9px;border:1px solid #888;background:#333"></div>
<span class="t" style="left:14px;top:546px;font-size:6px;color:#d8d8d8">c) Pencil-4 Soft</span>
<span class="t" style="left:261px;top:546px;font-size:6.25px;color:#d0d0d0">RGB/Alpha (8-bit integer/channel)  sRGB-elle-V2-srgbtrc.icc</span>
<span class="t" style="left:751px;top:546px;font-size:5.95px;color:#d0d0d0">1,920 x 1,080 (10.1 MiB)</span>
<svg class="a" style="left:879px;top:544px" width="10" height="10"><path d="M1 4l3-3h5v5l-3 3z" fill="#bbb"/><circle cx="4" cy="4" r="1" fill="#333"/></svg>
<span class="t" style="left:928px;top:546px;font-size:6px;color:#d0d0d0">69%</span>
<div class="a" style="left:950px;top:548.5px;width:42px;height:2.5px;background:#2c2c2c"></div>
<div class="a" style="left:950px;top:548.5px;width:12px;height:2.5px;background:#6a8eb4"></div>
<div class="a" style="left:961px;top:546.5px;width:5px;height:6px;background:#474747"></div>
<div class="a" style="left:995px;top:544px;width:6px;height:9px;background:#ddd;border:1px solid #888"></div>


<!-- RIGHT DOCK -->
<div class="a" style="left:855px;top:47px;width:2.5px;height:493px;background:#333"></div>
<span class="t" style="left:861px;top:49px;font-size:5.6px;color:#d0d0d0">Overview</span>
<svg class="a" style="left:988px;top:48px" width="12" height="8"><g fill="none" stroke="#777" stroke-width="0.8"><rect x="0.5" y="0.5" width="4.5" height="6"/><rect x="6.5" y="0.5" width="4.5" height="6"/></g></svg>
<div class="a" style="left:860px;top:57px;width:140px;height:44px;background:#2b2b2b"></div>
<div class="a" style="left:893px;top:56.5px;width:80px;height:45px;background:#fff;border-top:1px dashed #222;border-bottom:1px dashed #222"></div>
<svg class="a" style="left:893px;top:56px" width="80" height="46" viewBox="0 0 80 46"><g transform="matrix(0.1151 0 0 0.113 -17.61 -10.57)" fill="none" stroke="#c04a60" stroke-width="6.5" opacity="0.5" stroke-linecap="round"><path d="M462 168C440 164 424 176 417 200C411 225 411 255 414 285C418 320 424 350 424 372C423 382 420 388 416 391"/><path d="M474 170C452 170 432 180 423 200C416 222 416 250 420 285C424 320 430 350 430 372"/><path d="M468 172C446 176 434 190 428 210C423 235 424 270 428 305"/><path d="M455 166C432 166 416 185 411 215C408 245 410 280 414 310"/><path d="M416 391C426 390 440 382 451 368"/><path d="M420 389C432 378 442 368 448 355"/><path d="M461 204C459 225 458 250 458 275C457 300 452 330 440 362C432 378 426 386 422 390"/><path d="M466 215C466 245 468 270 466 292"/><path d="M456 210C454 240 452 270 448 300"/><path d="M470 172C460 178 456 195 460 210C464 222 474 224 480 212C486 198 484 178 476 171z"/><path d="M480 170C470 176 468 195 474 210C480 220 492 214 496 198C498 184 492 170 482 169z"/><path d="M476 176C472 190 474 204 480 212"/><path d="M456 198C460 196 468 200 474 212"/><path d="M454 208C460 198 470 196 478 204"/><path d="M482 169C505 163 535 170 550 184C556 190 559 196 560 200"/><path d="M490 176C512 170 536 176 548 192C552 197 556 202 558 205"/><path d="M488 181C500 176 522 176 540 186"/><path d="M500 195C515 194 530 200 538 212C544 220 546 232 545 242"/><path d="M489 192C502 205 514 218 524 227C528 231 531 233 533 234"/><path d="M474 212C476 224 480 238 490 250C500 258 512 260 526 252"/><path d="M485 199C490 212 500 228 513 243"/><path d="M478 249C488 256 504 260 518 254C526 251 530 249 533 247"/><path d="M487 232C495 230 505 230 518 234"/><path d="M509 230C514 232 516 236 511 247"/><path d="M480 222C482 240 492 254 508 262C520 266 530 262 538 254"/><path d="M540 203C550 220 553 243 553 265C553 280 550 292 546 300"/><path d="M544 210C547 230 546 255 544 280C542 300 540 310 539 317"/><path d="M555 203C560 225 562 250 561 270"/><path d="M530 240C534 260 536 285 537 312"/><path d="M513 247C511 262 508 280 504 296"/><path d="M505 270C498 280 494 290 492 298"/><path d="M437 311C445 292 462 287 482 290C498 294 504 306 500 314C494 322 478 324 462 320C446 316 437 314 437 311z"/><path d="M463 289C480 294 500 302 522 316C532 325 538 334 542 343"/><path d="M457 336C470 344 490 348 510 347C522 346 530 344 536 342"/><path d="M457 349C468 354 482 357 500 355"/><path d="M500 343C500 356 508 362 519 362C530 361 538 354 538 343C538 332 530 324 519 324C508 324 500 332 500 343z"/><path d="M541 342C548 356 556 370 563 378C570 388 578 396 581 404C582 410 582 414 580 416"/><path d="M580 415C574 420 566 422 560 421C554 420 548 419 545 418"/><path d="M514 368C522 378 530 388 538 396C548 406 556 414 562 418"/><path d="M511 372C518 382 526 392 532 398C538 404 542 408 546 412"/><path d="M545 346C554 362 566 378 578 396"/><path d="M454 273C450 290 446 310 444 330C441 350 440 370 444 388C448 402 458 420 476 431C490 439 504 442 516 440C522 439 527 438 530 436"/><path d="M451 300C448 320 447 345 449 365"/><path d="M435 305C430 320 427 340 426 364"/><path d="M518 400C526 398 534 400 540 404"/><path d="M516 410C526 406 536 408 546 414"/><path d="M518 420C528 416 540 416 550 420"/><path d="M520 428C532 424 544 424 553 428"/><path d="M526 436C536 434 546 432 554 426"/><path d="M530 402C528 410 528 418 530 426"/><path d="M538 404C536 412 538 422 540 430"/><path d="M453 420C452 440 448 458 436 472C430 480 428 486 427 492"/><path d="M457 420C455 445 452 465 444 480C441 486 440 490 439 494"/><path d="M462 440C458 455 450 470 445 488"/><path d="M532 445C528 460 522 475 516 494"/><path d="M536 444C535 460 534 478 533 494"/><path d="M461 204C459 230 458 260 458 285"/><path d="M455.5 203C459 197 466 195 470 200C471 204 466 208 459 211"/><path d="M461 195C463 186 468 178 478 173C486 172 490 176 491 184"/><path d="M485 200C483 205 481 208 478 211"/><path d="M474 212C478 232 488 248 505 256"/><path d="M543 346C552 362 566 382 581 402"/><path d="M418 220C416 250 416 290 420 320"/><path d="M540 210C548 225 551 250 550 275"/><path d="M482 169C505 164 530 168 548 183"/></g></svg>
<span class="t" style="left:890px;top:108px;font-size:5.6px;color:#c8c8c8">69%</span>
<div class="a" style="left:909.5px;top:110.5px;width:83px;height:2.5px;background:#2e2e2e"></div>
<div class="a" style="left:909.5px;top:110.5px;width:21.5px;height:2.5px;background:#6a90b8"></div>
<div class="a" style="left:931px;top:108.5px;width:6px;height:6px;background:#454545"></div>
<div class="a" style="left:995.5px;top:107px;width:6px;height:9px;background:#ddd;border:1px solid #888"></div>
<svg class="a" style="left:861px;top:122px" width="9" height="9"><g fill="none" stroke="#ddd" stroke-width="1"><rect x="1.5" y="1.5" width="6" height="6"/><path d="M4.5 0.5v8M1 3.5h7"/></g></svg>
<div class="a" style="left:875.5px;top:121.5px;width:61px;height:9.5px;background:#4b76a4"></div>
<div class="a" style="left:936.5px;top:121.5px;width:61.5px;height:9.5px;background:#303030"></div>
<span class="t" style="left:919px;top:123px;font-size:5.6px;color:#e0e6ee">Rotation: 0.00°</span>
<div class="a" style="left:929px;top:134px;width:10px;height:1px;background:#5a5a5a"></div>
<!-- tabs -->
<div class="a" style="left:859.5px;top:137px;width:27px;height:11px;background:#404040;border:1px solid #4a4a4a;border-bottom:none"></div>
<span class="t" style="left:864px;top:139.5px;font-size:5.5px;color:#d8d8d8">Layers</span>
<div class="a" style="left:888px;top:138px;width:42px;height:10px;background:#373737"></div>
<span class="t" style="left:892px;top:139.5px;font-size:5.4px;color:#c8c8c8">Compositions</span>
<div class="a" style="left:932px;top:138px;width:40px;height:10px;background:#373737"></div>
<span class="t" style="left:936px;top:139.5px;font-size:5.6px;color:#c8c8c8">Undo History</span>
<span class="t" style="left:861px;top:151.5px;font-size:5.6px;color:#c8c8c8">Layers</span>
<svg class="a" style="left:988px;top:151px" width="12" height="8"><g fill="none" stroke="#777" stroke-width="0.8"><rect x="0.5" y="0.5" width="4.5" height="6"/><rect x="6.5" y="0.5" width="4.5" height="6"/></g></svg>
<div class="a" style="left:860px;top:160px;width:121.5px;height:10px;background:#333;border-radius:1px"></div>
<span class="t" style="left:861px;top:162px;font-size:5.6px;color:#c8c8c8">Normal</span>
<svg class="a" style="left:975px;top:163px" width="5" height="4"><path d="M0 0h4l-2 3z" fill="#aaa"/></svg>
<svg class="a" style="left:984px;top:160px" width="16" height="10"><path d="M1 1.5h7l-2.5 3v4l-2-1v-3z" fill="none" stroke="#ccc" stroke-width="0.9"/><path d="M12 4h4l-2 2.5z" fill="#aaa"/></svg>
<div class="a" style="left:860px;top:172px;width:121.5px;height:15px;background:#4b76a4"></div>
<span class="t" style="left:901.5px;top:176.5px;font-size:5.8px;color:#e8eef4">Opacity: 100%</span>
<svg class="a" style="left:982px;top:172px" width="6" height="15"><path d="M1 6l2-2l2 2zM1 9l2 2l2-2z" fill="#999"/></svg>
<div class="a" style="left:992px;top:173px;width:8px;height:13px;background:#2a2a2a;border:1px solid #666"></div>
<div class="a" style="left:994px;top:176px;width:6px;height:7px;background:#ddd"></div>
<!-- layer list -->
<div class="a" style="left:859px;top:187.5px;width:141px;height:121px;background:#2d2d2d"></div>
<div class="a" style="left:871.5px;top:187.5px;width:128.5px;height:15px;background:#4b76a4"></div>
<div class="a" style="left:875.5px;top:189.5px;width:6px;height:11.5px;background:#fff;border:1px solid #333"></div>
<div class="a" style="left:885.5px;top:187.5px;width:1px;height:15px;background:#3b6086"></div>
<svg class="a" style="left:887px;top:188px" width="7" height="8"><path d="M1.5 6.5v-5h4v3h-2" fill="none" stroke="#ddd" stroke-width="0.8"/></svg>
<span class="t" style="left:894.5px;top:191.5px;font-size:5.8px;color:#f0f0f0">Layer 1</span>
<svg class="a" style="left:972px;top:189px" width="28" height="12"><g fill="none" stroke="#a8c0d8" stroke-width="0.8"><path d="M3 3h4v6h-4zM2 9h6"/><path d="M17 3.5a2.5 2.5 0 1 0 0 5M19 3.5l2 5M21 3.5l-2 5"/><circle cx="26" cy="6" r="2.5"/></g><path d="M11.5 0v12M22.5 0v12" stroke="#3b6086"/></svg>
<svg class="a" style="left:861px;top:190px" width="10" height="9"><path d="M0.5 4.5c2-3 7-3 9 0c-2 3-7 3-9 0z" fill="#eee"/><circle cx="5" cy="4.5" r="1.6" fill="#222"/><path d="M1 7c2 2 6 2 8 0" stroke="#ccc" fill="none"/></svg>
<svg class="a" style="left:861px;top:205px" width="10" height="9"><path d="M0.5 4.5c2-3 7-3 9 0c-2 3-7 3-9 0z" fill="#eee"/><circle cx="5" cy="4.5" r="1.6" fill="#222"/><path d="M1 7c2 2 6 2 8 0" stroke="#ccc" fill="none"/></svg>
<div class="a" style="left:873px;top:206.5px;width:11.5px;height:6.5px;background:#fff"></div>
<svg class="a" style="left:887px;top:203px" width="7" height="8"><path d="M1.5 6.5v-5h4v3h-2" fill="none" stroke="#ddd" stroke-width="0.8"/></svg>
<span class="t" style="left:894.5px;top:206.5px;font-size:5.6px;color:#e0e0e0">Background</span>
<svg class="a" style="left:975px;top:204px" width="25" height="12"><rect x="1" y="5" width="7" height="6" fill="#eee"/><path d="M2.5 5v-2a2 2 0 0 1 4 0v2" fill="none" stroke="#eee" stroke-width="1.2"/><g fill="none" stroke="#999" stroke-width="0.8"><path d="M14 3.5a2.5 2.5 0 1 0 0 5M16 3.5l2 5M18 3.5l-2 5"/><circle cx="23" cy="6" r="2.5"/></g></svg>
<!-- layer buttons -->
<svg class="a" style="left:859px;top:310px" width="141" height="14">
 <g fill="none" stroke="#e0e0e0" stroke-width="1.2">
  <rect x="2.5" y="2.5" width="8.5" height="8.5"/><path d="M6.75 4.5v4.5M4.5 6.75h4.5"/>
  <rect x="26" y="2.5" width="7" height="7"/><path d="M24 5v6.5h6.5"/>
  <path d="M41 5l4.5 4.5l4.5-4.5"/><path d="M57 9l4.5-4.5l4.5 4.5"/>
  <path d="M74 3.5h9M74 6.5h9M74 9.5h9"/>
 </g>
 <path d="M14 6h4l-2 2z" fill="#aaa"/>
 <rect x="135.5" y="4" width="7" height="8" fill="#e8e8e8"/><rect x="135" y="2.5" width="8" height="1.5" fill="#e8e8e8"/>
</svg>
<div class="a" style="left:929px;top:326px;width:10px;height:1px;background:#5a5a5a"></div>
<span class="t" style="left:861px;top:331.5px;font-size:5.6px;color:#c8c8c8">Tool Options</span>
<span class="t" style="left:861px;top:347px;font-size:5.5px;color:#c8c8c8">Brush Smoothing:</span>
<div class="a" style="left:920px;top:344px;width:80px;height:13px;background:#383838;border-top:1px solid #4a4a4a"></div>
<span class="t" style="left:921px;top:347.5px;font-size:5.6px;color:#d0d0d0">Basic</span>
<svg class="a" style="left:995px;top:349px" width="5" height="4"><path d="M0 0h4l-2 3z" fill="#ccc"/></svg>
<div class="a" style="left:860px;top:358px;width:140px;height:1.3px;background:#8a8a8a"></div>
<div class="a" style="left:861px;top:363.5px;width:7px;height:7px;background:#2e2e2e;border:1px solid #3a3a3a"></div>
<span class="t" style="left:871px;top:364.5px;font-size:5.4px;color:#c8c8c8">Snap to Assistants</span>
<div class="a" style="left:929px;top:438.5px;width:10px;height:1px;background:#5a5a5a"></div>
<span class="t" style="left:861px;top:443px;font-size:5.5px;color:#d0d0d0">Snapshot Docker</span>
<svg class="a" style="left:988px;top:443px" width="12" height="8"><g fill="none" stroke="#777" stroke-width="0.8"><rect x="0.5" y="0.5" width="4.5" height="6"/><rect x="6.5" y="0.5" width="4.5" height="6"/></g></svg>
<div class="a" style="left:859.5px;top:450.5px;width:140.5px;height:73px;background:#2d2d2d"></div>
<svg class="a" style="left:880px;top:527px" width="100" height="13">
 <g fill="none" stroke="#e8e8e8" stroke-width="1.1"><rect x="6" y="2" width="8.5" height="8.5"/><path d="M10.25 4v4.5M8 6.25h4.5"/></g>
 <g fill="none" stroke="#aaa" stroke-width="1"><rect x="47" y="3.5" width="9" height="7" rx="1"/><path d="M49 3.5l1-1.5h3l1 1.5"/><circle cx="51.5" cy="7" r="1.8"/></g>
 <rect x="89" y="3.5" width="6" height="7" rx="0.8" fill="#e8e8e8"/><rect x="88.5" y="2" width="7" height="1.2" fill="#e8e8e8"/>
</svg>

<!-- LEFT DOCK DETAILS (body coords) -->
<svg class="a" style="left:0;top:47px" width="151" height="125" viewBox="0 47 151 125">
 <g fill="none" stroke="#e4e4e4" stroke-width="1.5" stroke-linecap="round" stroke-linejoin="round">
  <!-- row1 y60 -->
  <path d="M-1 55l5 4l-2 1l2 3l-1 1l-2-3l-2 2z" fill="#e4e4e4"/>
  <path d="M11.5 55.5h8M15.5 55.5v9M13.5 64.5h4"/>
  <path d="M25 64c0-5 3-8 8-8"/><path d="M29 59l4 3l-4 2z" fill="#dedede"/>
  <path d="M39 63l2-5l6-3l-2 6z"/><path d="M39 63l4-4"/>
  <!-- row2 y77 -->
  <path d="M11.5 81.5l7-8"/>
  <rect x="25" y="72.5" width="8.5" height="8.5"/>
  <circle cx="42.5" cy="76.8" r="4.5"/>
  <path d="M52 81c0-4 4-8 8-8c0 4-4 8-8 8z"/>
  <path d="M66 73l8 4l-7 4l-1-8z"/><path d="M67 76l2 2"/>
  <path d="M80 73h8M81 73v8M87 73v8M84 74l-3 3"/>
  <path d="M93 74c3-1 6-1 8 0M96 74l1 7"/>
  <path d="M107 73c3-1 6 0 7 2c0 3-4 5-7 6"/><path d="M110 77l1 0"/>
  <path d="M121 80l3-3l-2-1l6-3l-1 7l-2-2l-2 3"/>
  <!-- row3 y94 -->
  <path d="M-1 89.5h5v9h-5"/>
  <path d="M15.5 89.5v9M11 94h9"/>
  <path d="M26 89v7h7M28 91.5h6v7"/>
  <!-- row4 y111 -->
  <path d="M18 106l2 2l-6 6l-2 2l-1-1l2-2z"/><path d="M16 106l4 4"/>
  <path d="M25 116l8-9"/><circle cx="28" cy="113" r="1.4"/>
  <path d="M39 115l7-8M39 107l7 8"/><circle cx="40" cy="109" r="0.8"/><circle cx="45" cy="113" r="0.8"/>
  <path d="M53 111l4-5l4 5l-4 3z"/><path d="M61 111l1 3"/>
  <!-- row5 y128 -->
  <path d="M-1 132.5h6l-6-7"/>
  <path d="M11 123l7 9l1-8M14 127l4 1"/>
  <path d="M25 133l3-3M27 126l5 5M28 125l2 2l3-1l-1 3l2 2"/>
 </g>
 <g fill="none" stroke="#e4e4e4" stroke-width="1.5" stroke-dasharray="1.8 1.1">
  <!-- row6 y145 selection -->
  <rect x="-2" y="140.5" width="6" height="9"/>
  <circle cx="15.5" cy="145.5" r="4.3"/>
  <path d="M25 149l1-6l4-2l4 2l-1 4l-4 2z"/>
  <path d="M39 141h5l3 3v5M44 145v4"/>
  <path d="M66 141h8v8h-8z"/>
  <path d="M80 141h8l-1 6l-3 2l-3-2z"/>
  <path d="M94 141h7v8h-7M98 142c2 0 3 1 3 3"/>
 </g>
 <g fill="#dedede">
  <circle cx="54" cy="143" r="2.4"/><path d="M55 144l4 4l-1 1l-4-4z"/>
  <path d="M69 143l3 3l-2 1z"/>
  <rect x="12" y="160" width="8" height="6.5" rx="2"/><rect x="12.5" y="157.5" width="1.8" height="4" rx="0.8"/><rect x="14.5" y="156.5" width="1.8" height="4" rx="0.8"/><rect x="16.5" y="157" width="1.8" height="4" rx="0.8"/>
 </g>
 <g fill="none" stroke="#dedede" stroke-width="1.3">
  <circle cx="2" cy="161" r="2.5"/><path d="M-1 165l2-2"/>
 </g>
</svg>
<div class="a" style="left:0;top:70px;width:8px;height:14px;background:#4e6f98;border-radius:1px;border:1px solid #5e86b0"></div>
<svg class="a" style="left:0;top:70px" width="9" height="14"><path d="M1 12l6-9" stroke="#f0f0f0" stroke-width="1.8"/></svg>
<div class="a" style="left:0;top:107px;width:5px;height:9px;background:linear-gradient(90deg,#ddd,#555)"></div>
<div class="a" style="left:0;top:12px;width:1000px;height:5.5px;background:linear-gradient(180deg,#fff,rgba(255,255,255,0))"></div>
<div class="a" style="left:0;top:554.5px;width:1000px;height:5.5px;background:linear-gradient(0deg,#fff,rgba(255,255,255,0))"></div>
</body></html>
